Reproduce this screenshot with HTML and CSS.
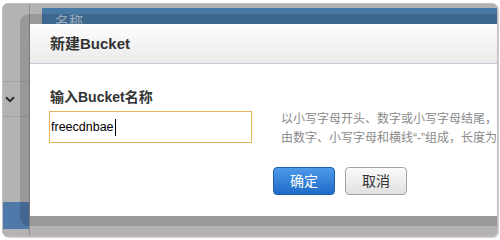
FILE: index.html
```html
<!DOCTYPE html>
<html lang="zh-CN">
<head>
<meta charset="utf-8">
<title>新建Bucket</title>
<link rel="stylesheet" href="styles.css">
</head>
<body>
<div class="frame">
  <div class="app">
    <aside class="side">
      <div class="side-top"></div>
      <div class="side-toggle">
        <svg class="chev" width="10" height="7" viewBox="0 0 10 7"><path d="M1 1.2 L5 5.2 L9 1.2" fill="none" stroke="#2b2b2b" stroke-width="2"/></svg>
      </div>
      <div class="side-fill"></div>
      <div class="side-active"></div>
      <div class="side-bottom"></div>
    </aside>
    <main class="main">
      <div class="thead"><span class="th">名称</span></div>
    </main>
  </div>
  <div class="modal">
    <div class="modal-head">新建Bucket</div>
    <div class="modal-body">
      <div class="form-row">
        <div class="field">
          <label class="label">输入Bucket名称</label>
          <div class="input">freecdnbae<span class="caret"></span></div>
        </div>
        <p class="hint">以小写字母开头、数字或小写字母结尾，<br>由数字、小写字母和横线“-”组成，长度为3-63个字符</p>
      </div>
      <div class="actions">
        <button class="btn btn-primary">确定</button>
        <button class="btn btn-default">取消</button>
      </div>
    </div>
  </div>
</div>
</body>
</html>
```

FILE: styles.css
```css
* { box-sizing: border-box; }
html, body {
  margin: 0;
  padding: 0;
  background: #ffffff;
}
body {
  font-family: "Liberation Sans", "Noto Sans CJK SC", sans-serif;
  width: 500px;
  height: 240px;
  overflow: hidden;
}
.frame {
  position: relative;
  margin: 3px 0 0 2px;
  width: 496px;
  height: 234px;
  border: 1px solid #c6bcbc;
  border-radius: 6px;
  background: #b2b2b2;
  overflow: hidden;
  box-shadow: 1px 1px 0 #d8d0d0;
}
.app {
  display: flex;
  height: 100%;
}
.side {
  width: 27px;
  flex: none;
  display: flex;
  flex-direction: column;
  background: #b3b3b3;
  border-right: 1px solid #8f8f8f;
}
.side-top {
  height: 78px;
  border-bottom: 1px solid #a3a3a3;
}
.side-toggle {
  height: 35px;
  border-bottom: 1px solid #a3a3a3;
  display: flex;
  align-items: center;
  padding-left: 2px;
  padding-top: 1px;
}
.chev { display: block; }
.side-fill { flex: 1; }
.side-active {
  height: 27px;
  background: #4f79a9;
}
.side-bottom { height: 7px; }
.main {
  flex: 1;
  padding: 4px 0 0 12px;
  background: #b3b3b3;
}
.thead {
  height: 30px;
  background: #4779a5;
  padding: 4px 0 0 13px;
}
.th {
  font-size: 14px;
  line-height: 16px;
  color: #b4c6d8;
}
.modal {
  position: absolute;
  left: 17px;
  top: 10px;
  width: 540px;
  border: 10px solid rgba(0, 0, 0, 0.14);
  border-radius: 9px;
  background: #ffffff;
  background-clip: padding-box;
}
.modal-head {
  height: 40px;
  padding-left: 20px;
  font-size: 15px;
  font-weight: bold;
  line-height: 39px;
  color: #333333;
  background: linear-gradient(#fdfdfd, #ebebeb);
  border-bottom: 1px solid #c5cdda;
}
.modal-body {
  padding: 25px 19px 21px 19px;
}
.form-row {
  display: flex;
  align-items: flex-start;
}
.field {
  width: 203px;
  flex: none;
}
.label {
  display: block;
  padding-left: 1px;
  margin-bottom: 6px;
  font-size: 14px;
  font-weight: bold;
  line-height: 16px;
  color: #333333;
}
.input {
  display: flex;
  align-items: center;
  height: 32px;
  padding-left: 1px;
  border: 1px solid #e5b55c;
  font-size: 12.5px;
  color: #000000;
  white-space: nowrap;
}
.caret {
  display: inline-block;
  width: 1px;
  height: 17px;
  margin-left: 1px;
  background: #000000;
}
.hint {
  margin: 21px 0 0 29px;
  font-size: 12px;
  line-height: 19px;
  color: #8a8a8a;
  white-space: nowrap;
}
.actions {
  display: flex;
  gap: 10px;
  margin-top: 19px;
  padding-left: 224px;
}
.btn {
  width: 62px;
  height: 28px;
  padding: 0;
  border-radius: 4px;
  font-family: "Liberation Sans", "Noto Sans CJK SC", sans-serif;
  font-size: 14px;
  line-height: 26px;
  cursor: pointer;
}
.btn-primary {
  color: #ffffff;
  border: 1px solid #1c5fae;
  background: linear-gradient(#4d9ae8, #1f6bc8);
}
.btn-default {
  color: #333333;
  border: 1px solid #a4a4a4;
  background: linear-gradient(#fbfbfb, #e0e0e0);
}
```
